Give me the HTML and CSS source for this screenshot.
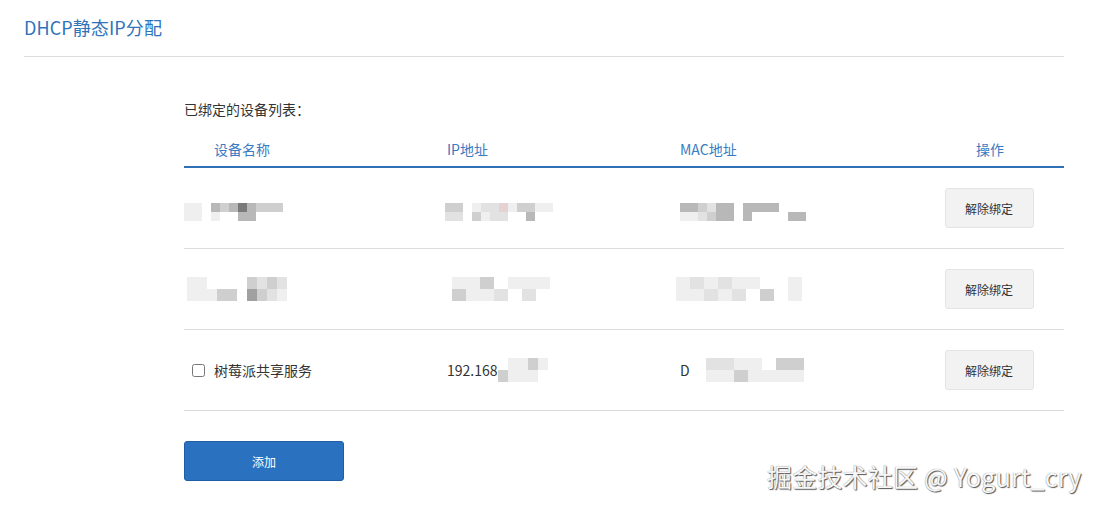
FILE: index.html
```html
<!DOCTYPE html>
<html lang="zh-CN">
<head>
<meta charset="utf-8">
<title>DHCP静态IP分配</title>
<link rel="stylesheet" href="styles.css">
</head>
<body>
<div class="page">
  <div class="title-bar"><h1 class="title">DHCP静态IP分配</h1></div>
  <div class="section">
    <div class="list-title">已绑定的设备列表：</div>
    <div class="table">
      <div class="thead">
        <div class="th th-pad">设备名称</div>
        <div class="th th-pad">IP地址</div>
        <div class="th th-pad">MAC地址</div>
        <div class="th th-center">操作</div>
      </div>
      <div class="tr">
        <div class="td">
          <div class="mosaic m9 r1"><i class="s1"></i><i class="s1"></i><i class="s1"></i><i class="s1"></i><i class="s0"></i><i class="s0"></i><i class="s4"></i><i class="s1"></i><i class="s3"></i><i class="s0"></i><i class="s4"></i><i class="s0"></i><i class="s6"></i><i class="s4"></i><i class="s4"></i><i class="s4"></i><i class="s3"></i><i class="s0"></i><i class="s3"></i><i class="s0"></i><i class="s3"></i><i class="s0"></i></div>
        </div>
        <div class="td td-pad">
          <div class="mosaic m9 r1 shift-l"><i class="s3"></i><i class="s2"></i><i class="s3"></i><i class="s2"></i><i class="s0"></i><i class="s0"></i><i class="s1"></i><i class="s3"></i><i class="s2"></i><i class="s1"></i><i class="s2"></i><i class="s2"></i><i class="sp"></i><i class="s2"></i><i class="s1"></i><i class="s0"></i><i class="s3"></i><i class="s0"></i><i class="s3"></i><i class="s4"></i><i class="s1"></i><i class="s0"></i><i class="s1"></i><i class="s0"></i></div>
        </div>
        <div class="td td-pad">
          <div class="mosaic m9 r1"><i class="s4"></i><i class="s1"></i><i class="s4"></i><i class="s1"></i><i class="s3"></i><i class="s2"></i><i class="s2"></i><i class="s3"></i><i class="s4"></i><i class="s4"></i><i class="s4"></i><i class="s4"></i><i class="s0"></i><i class="s0"></i><i class="s4"></i><i class="s4"></i><i class="s4"></i><i class="s0"></i><i class="s4"></i><i class="s0"></i><i class="s4"></i><i class="s0"></i><i class="s0"></i><i class="s0"></i><i class="s0"></i><i class="s4"></i><i class="s0"></i><i class="s4"></i></div>
        </div>
        <div class="td td-center"><button class="btn-unbind">解除绑定</button></div>
      </div>
      <div class="tr">
        <div class="td">
          <div class="mosaic m10 shift-r"><i class="s1"></i><i class="s1"></i><i class="s1"></i><i class="s1"></i><i class="s0"></i><i class="s1"></i><i class="s0"></i><i class="s3"></i><i class="s0"></i><i class="s3"></i><i class="s0"></i><i class="s0"></i><i class="s3"></i><i class="s5"></i><i class="s2"></i><i class="s3"></i><i class="s3"></i><i class="s2"></i><i class="s2"></i><i class="s1"></i></div>
        </div>
        <div class="td td-pad">
          <div class="mosaic m14 shift-r2"><i class="s1"></i><i class="s3"></i><i class="s1"></i><i class="s1"></i><i class="s3"></i><i class="s1"></i><i class="s0"></i><i class="s2"></i><i class="s1"></i><i class="s0"></i><i class="s1"></i><i class="s2"></i><i class="s1"></i><i class="s0"></i></div>
        </div>
        <div class="td td-pad">
          <div class="mosaic m14 shift-l2"><i class="s1"></i><i class="s1"></i><i class="s2"></i><i class="s1"></i><i class="s1"></i><i class="s2"></i><i class="s2"></i><i class="s1"></i><i class="s1"></i><i class="s2"></i><i class="s1"></i><i class="s0"></i><i class="s0"></i><i class="s3"></i><i class="s0"></i><i class="s0"></i><i class="s1"></i><i class="s1"></i></div>
        </div>
        <div class="td td-center"><button class="btn-unbind">解除绑定</button></div>
      </div>
      <div class="tr">
        <div class="td">
          <label class="device"><input type="checkbox" class="check"><span>树莓派共享服务</span></label>
        </div>
        <div class="td td-pad">
          <span class="val">192.168</span><div class="mosaic m10"><i class="s0"></i><i class="s3"></i><i class="s1"></i><i class="s1"></i><i class="s1"></i><i class="s1"></i><i class="s3"></i><i class="s1"></i><i class="s1"></i><i class="s0"></i></div>
        </div>
        <div class="td td-pad">
          <span class="val">D</span><div class="mosaic m14 gap-l"><i class="s2"></i><i class="s1"></i><i class="s2"></i><i class="s1"></i><i class="s1"></i><i class="s3"></i><i class="s1"></i><i class="s1"></i><i class="s0"></i><i class="s1"></i><i class="s3"></i><i class="s1"></i><i class="s3"></i><i class="s1"></i></div>
        </div>
        <div class="td td-center"><button class="btn-unbind">解除绑定</button></div>
      </div>
    </div>
    <button class="btn-add">添加</button>
  </div>
</div>
<div class="watermark">掘金技术社区 @ Yogurt_cry</div>
</body>
</html>
```

FILE: styles.css
```css
* { box-sizing: border-box; }
html, body { margin: 0; padding: 0; background: #fff; }
body {
  font-family: "Noto Sans CJK SC", "Noto Sans", "Liberation Sans", sans-serif;
  color: #333;
  width: 1099px;
  height: 509px;
  overflow: hidden;
  position: relative;
}
.page {
  width: 1040px;
  margin-left: 24px;
}
.title-bar {
  border-bottom: 1px solid #dcdcdc;
  padding: 14px 0 16px;
}
.title {
  margin: 0;
  font-size: 18px;
  font-weight: 400;
  line-height: 26px;
  color: #2f74ba;
  letter-spacing: 0.1px;
}
.section {
  margin-left: 160px;
  padding-top: 42px;
}
.list-title {
  font-size: 14px;
  line-height: 20px;
  color: #333;
}
.table {
  margin-top: 13px;
  width: 880px;
}
.thead, .tr {
  display: grid;
  grid-template-columns: 233px 233px 264px 150px;
}
.thead {
  height: 36px;
  border-bottom: 2px solid #2f6fb5;
  align-items: center;
}
.th {
  font-size: 14px;
  color: #3a7bc2;
  line-height: 20px;
}
.th-pad { padding-left: 30px; }
.th-center { text-align: center; padding-left: 2px; }
.tr {
  height: 81px;
  border-bottom: 1px solid #dcdcdc;
  align-items: center;
}
.td {
  display: flex;
  align-items: center;
  font-size: 14px;
  color: #333;
}
.td-pad { padding-left: 30px; }
.td-center { justify-content: center; }
.device {
  display: flex;
  align-items: center;
  margin-left: 8px;
}
.check {
  margin: 0 9px 0 0;
  width: 13px;
  height: 13px;
}
.val { font-size: 14px; color: #333; }
.btn-unbind {
  width: 89px;
  height: 40px;
  background: #f2f2f2;
  border: 1px solid #e4e4e4;
  border-radius: 3px;
  font-family: inherit;
  font-size: 12px;
  color: #333;
  padding: 0;
}
.btn-add {
  margin-top: 30px;
  width: 160px;
  height: 40px;
  background: #2a72c0;
  border: 1px solid #1f5ea5;
  border-radius: 3px;
  color: #fff;
  font-family: inherit;
  font-size: 12px;
  padding: 0;
}
.mosaic {
  display: inline-grid;
  grid-auto-flow: column;
}
.mosaic i { display: block; }
.m9 { grid-template-rows: 9px 9px; grid-auto-columns: 9px; }
.m10 { grid-template-rows: 12px 12px; grid-auto-columns: 10px; }
.m14 { grid-template-rows: 12px 12px; grid-auto-columns: 14px; }
.r1 { margin-top: 8px; }
.shift-l { margin-left: -2px; }
.shift-l2 { margin-left: -4px; }
.shift-r { margin-left: 3px; }
.shift-r2 { margin-left: 5px; }
.gap-l { margin-left: 16px; }
.s0 { background: transparent; }
.s1 { background: #efefef; }
.s2 { background: #e2e2e2; }
.s3 { background: #cfcfcf; }
.s4 { background: #b8b8b8; }
.s5 { background: #a0a0a0; }
.s6 { background: #7a7a7a; }
.sp { background: #e6d2d2; }
.watermark {
  position: absolute;
  left: 767px;
  top: 459px;
  font-size: 25px;
  line-height: 34px;
  color: #f7f7f7;
  text-shadow: 1px 1px 1px #555, 0 0 1px #777;
  white-space: nowrap;
  letter-spacing: 0.2px;
}
```
